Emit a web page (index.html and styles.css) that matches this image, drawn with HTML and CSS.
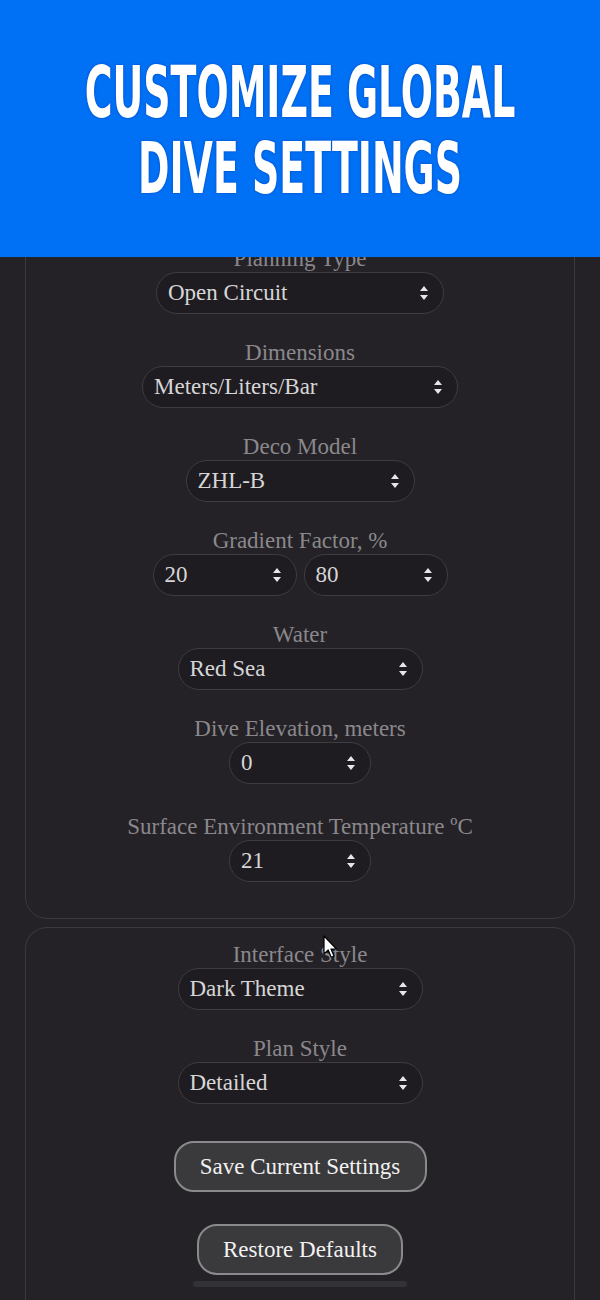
FILE: index.html
```html
<!DOCTYPE html>
<html>
<head>
<meta charset="utf-8">
<link rel="stylesheet" href="styles.css">
</head>
<body>
<div class="page">
  <section class="card card-main">
    <div class="field">
      <div class="label">Planning Type</div>
      <div class="select w288"><span>Open Circuit</span><svg class="arrows" viewBox="0 0 8 14"><path d="M4 0L8 5H0Z M4 14L8 9H0Z"/></svg></div>
    </div>
    <div class="field">
      <div class="label">Dimensions</div>
      <div class="select w316"><span>Meters/Liters/Bar</span><svg class="arrows" viewBox="0 0 8 14"><path d="M4 0L8 5H0Z M4 14L8 9H0Z"/></svg></div>
    </div>
    <div class="field">
      <div class="label">Deco Model</div>
      <div class="select w229"><span>ZHL-B</span><svg class="arrows" viewBox="0 0 8 14"><path d="M4 0L8 5H0Z M4 14L8 9H0Z"/></svg></div>
    </div>
    <div class="field">
      <div class="label">Gradient Factor, %</div>
      <div class="pair">
        <div class="select w144"><span>20</span><svg class="arrows" viewBox="0 0 8 14"><path d="M4 0L8 5H0Z M4 14L8 9H0Z"/></svg></div>
        <div class="select w144"><span>80</span><svg class="arrows" viewBox="0 0 8 14"><path d="M4 0L8 5H0Z M4 14L8 9H0Z"/></svg></div>
      </div>
    </div>
    <div class="field">
      <div class="label">Water</div>
      <div class="select w245"><span>Red Sea</span><svg class="arrows" viewBox="0 0 8 14"><path d="M4 0L8 5H0Z M4 14L8 9H0Z"/></svg></div>
    </div>
    <div class="field">
      <div class="label">Dive Elevation, meters</div>
      <div class="select w142"><span>0</span><svg class="arrows" viewBox="0 0 8 14"><path d="M4 0L8 5H0Z M4 14L8 9H0Z"/></svg></div>
    </div>
    <div class="field field-last">
      <div class="label">Surface Environment Temperature ºC</div>
      <div class="select w142"><span>21</span><svg class="arrows" viewBox="0 0 8 14"><path d="M4 0L8 5H0Z M4 14L8 9H0Z"/></svg></div>
    </div>
  </section>
  <section class="card card-style">
    <div class="field">
      <div class="label">Interface Style</div>
      <div class="select w245"><span>Dark Theme</span><svg class="arrows" viewBox="0 0 8 14"><path d="M4 0L8 5H0Z M4 14L8 9H0Z"/></svg></div>
    </div>
    <div class="field">
      <div class="label">Plan Style</div>
      <div class="select w245"><span>Detailed</span><svg class="arrows" viewBox="0 0 8 14"><path d="M4 0L8 5H0Z M4 14L8 9H0Z"/></svg></div>
    </div>
    <div class="buttons">
      <button class="btn w253">Save Current Settings</button>
      <button class="btn w206">Restore Defaults</button>
    </div>
    <div class="homebar"></div>
  </section>
</div>
<header class="banner">
  <h1 class="title"><span>CUSTOMIZE GLOBAL</span><span>DIVE SETTINGS</span></h1>
</header>
<svg class="cursor" viewBox="0 0 14 24"><path d="M1 1V19L5.2 15L8.2 22.2L11 21L8 14H13.5Z" fill="#fff" stroke="#000" stroke-width="1.2" stroke-linejoin="round"/></svg>
</body>
</html>
```

FILE: styles.css
```css
html, body {
  margin: 0;
  padding: 0;
  background: #242226;
}
body {
  width: 600px;
  height: 1300px;
  overflow: hidden;
  position: relative;
  font-family: "Liberation Serif", "DejaVu Serif", serif;
}
.page {
  padding: 0 25px;
}
.card {
  border: 1.5px solid #3a393d;
  border-radius: 22px;
  display: flex;
  flex-direction: column;
  align-items: center;
}
.card-main {
  margin-top: 210px;
  padding: 37px 0 8px;
}
.card-style {
  margin-top: 8px;
  padding: 16px 0 0;
  height: 400px;
  border-bottom: none;
  border-bottom-left-radius: 0;
  border-bottom-right-radius: 0;
}
.field {
  display: flex;
  flex-direction: column;
  align-items: center;
  margin-bottom: 28px;
}
.field-last {
  margin-top: 4px;
}
.label {
  color: #8a888c;
  font-family: "Liberation Serif", "DejaVu Serif", serif;
  font-size: 23px;
  line-height: 22px;
  height: 24px;
  white-space: nowrap;
}
.select {
  box-sizing: border-box;
  height: 42px;
  border: 1.5px solid #3d3c40;
  border-radius: 21px;
  background: #1e1c20;
  color: #d6d6d6;
  font-family: "Liberation Serif", "DejaVu Serif", serif;
  font-size: 23px;
  display: flex;
  align-items: center;
  justify-content: space-between;
  padding: 0 15px 0 11px;
}
.select span {
  line-height: 26px;
}
.arrows {
  width: 8px;
  height: 14px;
  fill: #e6e6e6;
}
.pair {
  display: flex;
  gap: 7px;
}
.w288 { width: 288px; }
.w316 { width: 316px; }
.w229 { width: 229px; }
.w144 { width: 144px; }
.w245 { width: 245px; }
.w142 { width: 142px; }
.buttons {
  display: flex;
  flex-direction: column;
  align-items: center;
  gap: 32px;
  margin-top: 9px;
}
.btn {
  box-sizing: border-box;
  height: 51px;
  border: 2.5px solid #8a898c;
  border-radius: 20px;
  background: #3a393c;
  color: #f2f2f2;
  font-family: "Liberation Serif", "DejaVu Serif", serif;
  font-size: 23px;
  padding: 0;
}
.w253 { width: 253px; }
.w206 { width: 206px; }
.homebar {
  margin-top: 6px;
  width: 214px;
  height: 6px;
  border-radius: 3px;
  background: #333236;
}
.banner {
  position: absolute;
  left: 0;
  top: 0;
  width: 600px;
  height: 257px;
  background: #0070f5;
  display: flex;
  align-items: center;
  justify-content: center;
}
.title {
  margin: 2px 0 0;
  display: flex;
  flex-direction: column;
  align-items: center;
  color: #fff;
  font-family: "DejaVu Sans Condensed", "DejaVu Sans", sans-serif;
  font-stretch: condensed;
  font-weight: bold;
  font-size: 72px;
  line-height: 76px;
  transform: scaleX(0.585);
  text-shadow: 0 0 3px rgba(0, 40, 140, 0.6);
  white-space: nowrap;
}
.cursor {
  position: absolute;
  left: 323px;
  top: 935px;
  width: 14px;
  height: 24px;
}
```
